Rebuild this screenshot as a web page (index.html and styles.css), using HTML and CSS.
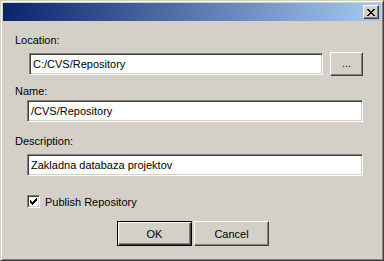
FILE: index.html
```html
<!DOCTYPE html>
<html lang="en">
  <head>
    <meta charset="UTF-8" />
    <title>Repository</title>
    <link rel="stylesheet" href="styles.css">
  </head>
  <body>
    <div class="window">
      <div class="titlebar">
        <span class="close">
          <svg width="8" height="7" viewBox="0 0 8 7" shape-rendering="crispEdges">
            <path d="M0 0h2v1H0zM6 0h2v1H6zM1 1h2v1H1zM5 1h2v1H5zM2 2h4v1H2zM3 3h2v1H3zM2 4h4v1H2zM1 5h2v1H1zM5 5h2v1H5zM0 6h2v1H0zM6 6h2v1H6z" fill="#000"/>
          </svg>
        </span>
      </div>

      <div class="content">
        <div class="label label-location">Location:</div>
        <div class="location-row">
          <input class="field field-location" type="text" value="C:/CVS/Repository">
          <button class="btn browse">...</button>
        </div>

        <div class="label label-name">Name:</div>
        <input class="field field-wide field-name" type="text" value="/CVS/Repository">

        <div class="label label-desc">Description:</div>
        <input class="field field-wide field-desc" type="text" value="Zakladna databaza projektov">

        <div class="check-row">
          <span class="checkbox">
            <svg width="7" height="7" viewBox="0 0 7 7" shape-rendering="crispEdges">
              <path d="M6 0h1v1H6zM5 1h2v1H5zM0 2h1v1H0zM4 2h3v1H4zM0 3h2v1H0zM3 3h3v1H3zM0 4h5v1H0zM1 5h3v1H1zM2 6h1v1H2z" fill="#000"/>
            </svg>
          </span>
          <span class="check-text">Publish Repository</span>
        </div>

        <div class="actions">
          <button class="btn default">OK</button>
          <button class="btn">Cancel</button>
        </div>
      </div>
    </div>
  </body>
</html>
```

FILE: styles.css
```css
body {
  margin: 0;
  background-color: #d4d0c8;
  font-family: "Liberation Sans", Arial, sans-serif;
  font-size: 11px;
  color: #000;
}
.window {
  width: 384px;
  height: 261px;
  box-sizing: border-box;
  padding: 2px;
  background-color: #d4d0c8;
  border: 1px solid;
  border-color: #d4d0c8 #404040 #404040 #d4d0c8;
  box-shadow: inset 1px 1px #fff, inset -1px -1px #808080; /* raised frame */
}
.titlebar {
  height: 18px;
  display: flex;
  justify-content: flex-end;
  align-items: flex-start;
  padding: 2px 2px 0 0;
  box-sizing: border-box;
  background: linear-gradient(to right, #0a246a, #a6caf0);
}
.close {
  width: 16px;
  height: 14px;
  box-sizing: border-box;
  display: flex;
  align-items: center;
  justify-content: center;
  padding: 1px 1px 0 0;
  background-color: #d4d0c8;
  border: 1px solid;
  border-color: #fff #404040 #404040 #fff;
  box-shadow: inset -1px -1px #808080;
}
.content {
  display: flex;
  flex-direction: column;
  align-items: flex-start;
  padding: 13px 0 0 12px;
}
.label {
  line-height: 13px;
}
.label-name {
  margin-top: 9px;
}
.label-desc {
  margin-top: 13px;
}
.location-row {
  display: flex;
  align-items: center;
  margin-top: 5px;
  padding-left: 14px;
}
.field {
  height: 22px;
  box-sizing: border-box;
  margin: 0;
  padding: 0 0 0 3px;
  font-family: inherit;
  font-size: 11px;
  color: #000;
  background-color: #fff;
  border: 1px solid;
  border-color: #808080 #fff #fff #808080;
  box-shadow: inset 1px 1px #404040, inset -1px -1px #d4d0c8; /* sunken edge */
  outline: none;
}
.field-location {
  width: 294px;
}
.field-wide {
  width: 336px;
  margin-left: 12px;
}
.field-name {
  margin-top: 2px;
}
.field-desc {
  margin-top: 6px;
}
.btn {
  height: 24px;
  margin: 0;
  padding: 0;
  box-sizing: border-box;
  font-family: inherit;
  font-size: 11px;
  color: #000;
  background-color: #d4d0c8;
  border: 1px solid;
  border-color: #fff #404040 #404040 #fff;
  box-shadow: inset -1px -1px #808080;
}
.browse {
  width: 33px;
  margin-left: 7px;
  padding-bottom: 2px;
}
.check-row {
  display: flex;
  align-items: center;
  margin: 19px 0 0 12px;
  height: 13px;
}
.checkbox {
  width: 13px;
  height: 13px;
  box-sizing: border-box;
  display: flex;
  align-items: center;
  justify-content: center;
  background-color: #fff;
  border: 1px solid;
  border-color: #808080 #fff #fff #808080;
  box-shadow: inset 1px 1px #404040, inset -1px -1px #d4d0c8;
}
.check-text {
  margin-left: 5px;
}
.actions {
  display: flex;
  gap: 2px;
  margin: 13px 0 0 102px;
}
.actions .btn {
  width: 75px;
  height: 25px;
}
.btn.default {
  border: 1px solid #000;
  box-shadow: inset 1px 1px #fff, inset -1px -1px #404040, inset -2px -2px #808080;
}
```
